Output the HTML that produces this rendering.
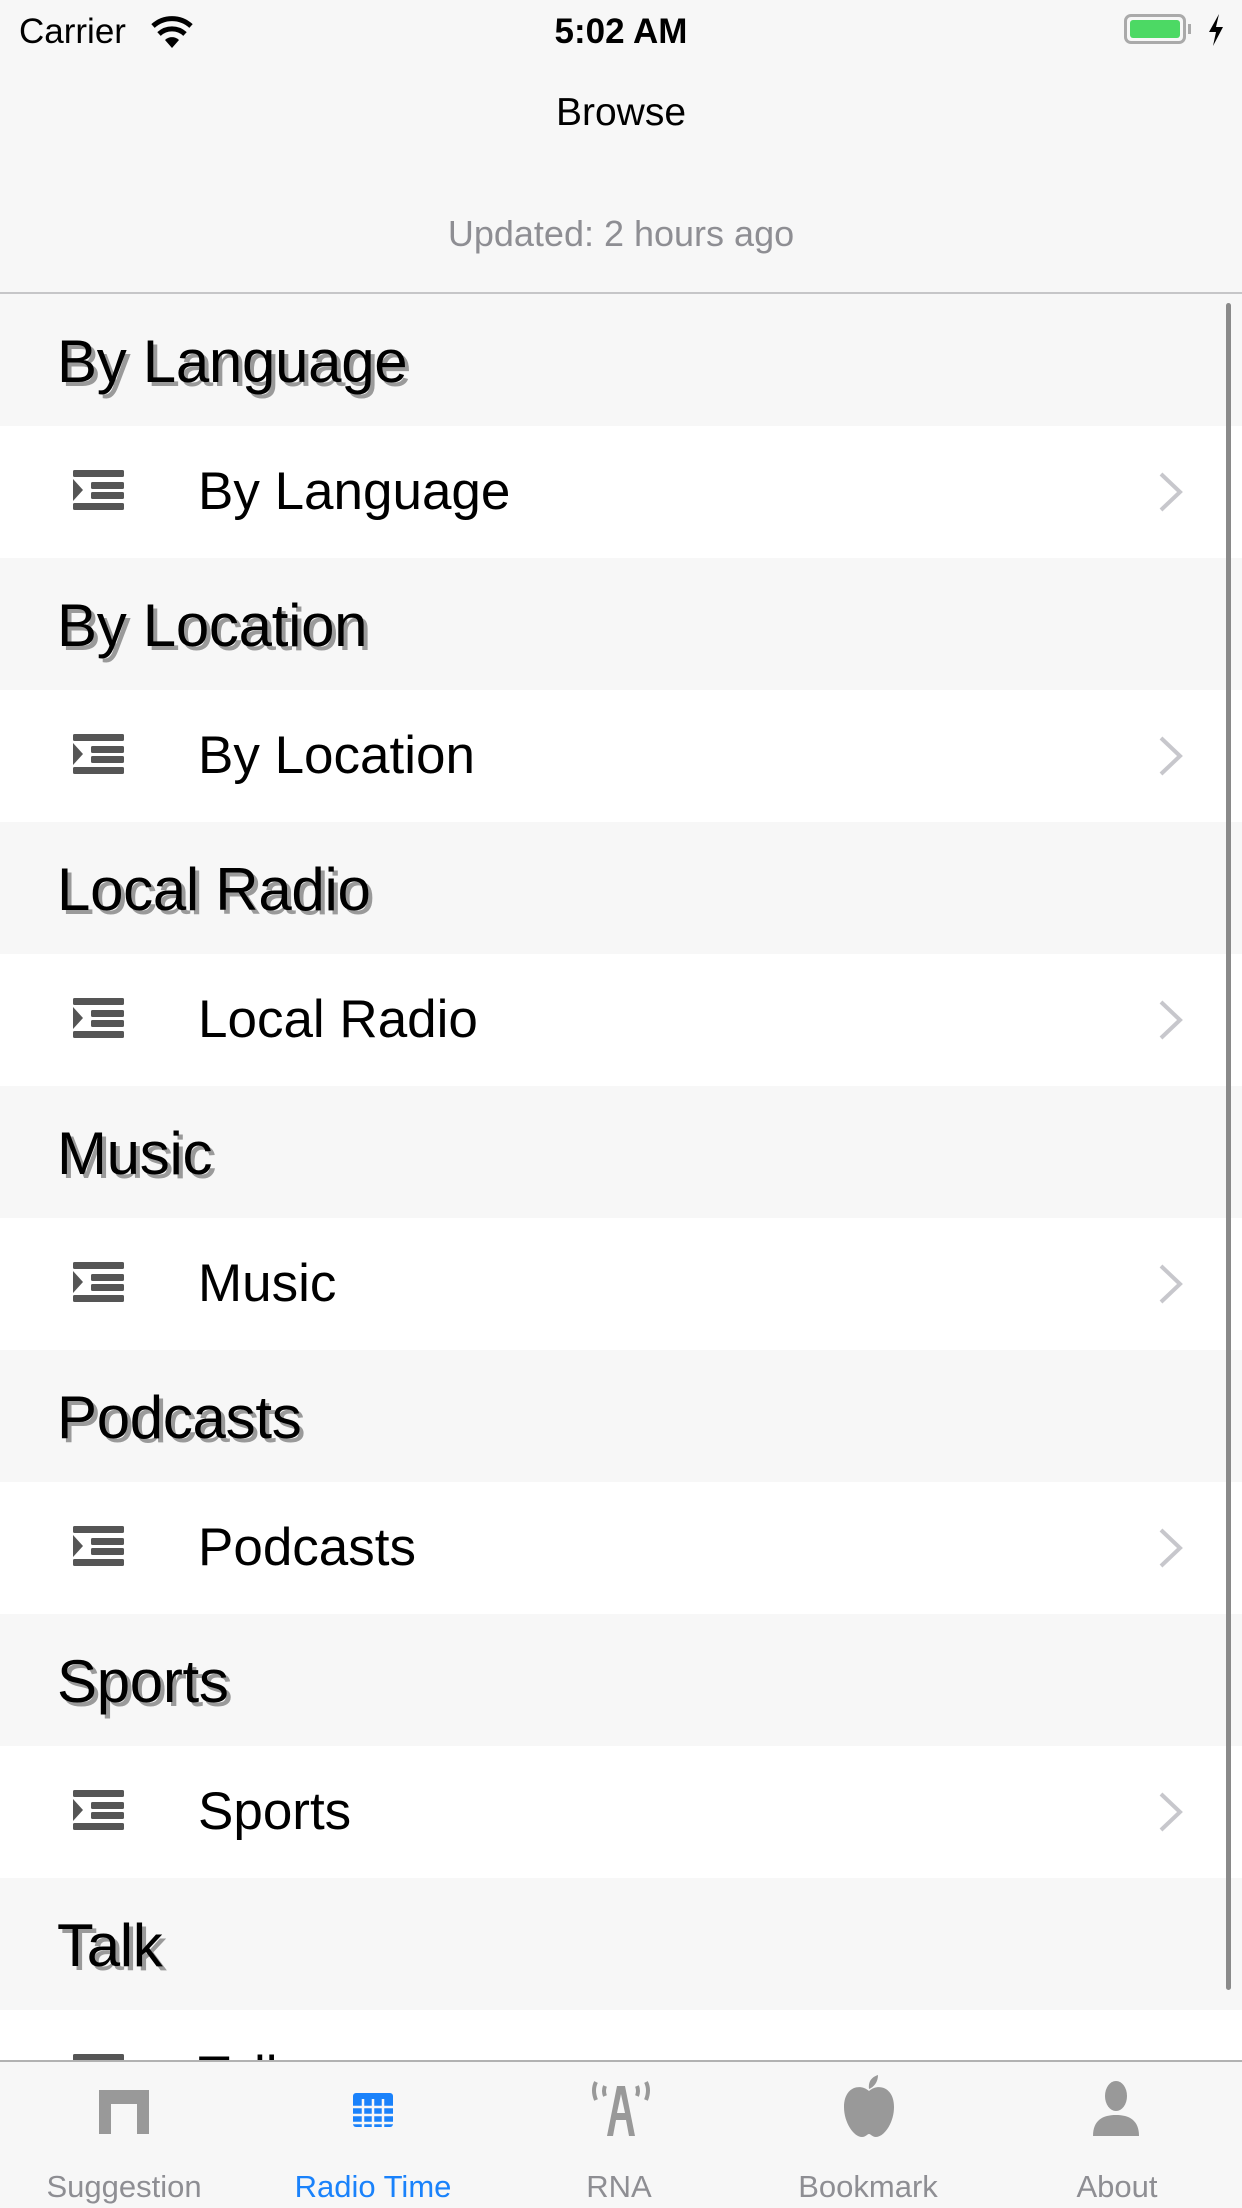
<!DOCTYPE html>
<html><head><meta charset="utf-8"><style>
body{margin:0;width:1242px;height:2208px;overflow:hidden;background:#fff;font-family:"Liberation Sans",Helvetica,sans-serif;position:relative}
.abs{position:absolute}
.sec{position:absolute;left:0;width:1242px;height:132px;background:#f7f7f7}
.sec span{position:absolute;left:57px;top:33px;font-size:60px;color:#000;text-shadow:4px 4px 0 #9a9a9a;letter-spacing:-0.3px}
.row{position:absolute;left:0;width:1242px;height:132px;background:#fff}
.row span{position:absolute;left:198px;top:35px;font-size:53px;color:#000}
.row svg.ic{position:absolute;left:73px;top:44px}
.row svg.ch{position:absolute;left:1158px;top:46px}
.tab{position:absolute;top:2060px;width:248px;height:148px;text-align:center}
.tab .l{position:absolute;left:0;right:0;top:109px;font-size:31px;color:#8e8e93}
</style></head><body>
<div class="abs" style="left:0;top:0;width:1242px;height:294px;background:#f7f7f7;border-bottom:2px solid #c6c6c8;box-sizing:border-box"></div>
<div class="abs" style="left:19px;top:12px;font-size:35px">Carrier</div>
<svg class="abs" style="left:150px;top:14px" width="44" height="34" viewBox="0 0 44 34"><path d="M22 34 L15 26 A10 10 0 0 1 29 26 Z" fill="#000"/><path d="M9 20 A19 19 0 0 1 35 20" stroke="#000" stroke-width="5" fill="none"/><path d="M3 12 A28 28 0 0 1 41 12" stroke="#000" stroke-width="5" fill="none"/></svg>
<div class="abs" style="left:0;width:1242px;top:12px;text-align:center;font-size:35px;font-weight:bold">5:02 AM</div>
<div class="abs" style="left:1124px;top:14px;width:62px;height:30px;border:3px solid #aaa;border-radius:7px;box-sizing:border-box;padding:3px"><div style="width:100%;height:100%;background:#4cd964;border-radius:3px"></div></div>
<div class="abs" style="left:1188px;top:24px;width:3px;height:10px;background:#aaa"></div>
<svg class="abs" style="left:1208px;top:14px" width="16" height="32" viewBox="0 0 16 32"><path d="M11 0 L1 18 H8 L5 32 L15 13 H8 Z" fill="#000"/></svg>
<div class="abs" style="left:0;width:1242px;top:91px;text-align:center;font-size:39px">Browse</div>
<div class="abs" style="left:0;width:1242px;top:213px;text-align:center;font-size:36px;color:#8e8e93">Updated: 2 hours ago</div>

<div class="sec" style="top:294px"><span>By Language</span></div>
<div class="row" style="top:426px"><svg class="ic" width="52" height="42" viewBox="0 0 52 42"><rect x="0" y="0" width="51" height="7" rx="1.5" fill="#555"/><rect x="18" y="12" width="33" height="7" rx="1.5" fill="#555"/><rect x="18" y="22" width="33" height="7" rx="1.5" fill="#555"/><rect x="0" y="33" width="51" height="7" rx="1.5" fill="#555"/><path d="M0 9 L10 20 L0 31Z" fill="#555"/></svg><span>By Language</span><svg class="ch" width="26" height="40" viewBox="0 0 26 40"><path d="M3 2 L22 20 L3 38" stroke="#c7c7cc" stroke-width="4" fill="none"/></svg></div>
<div class="sec" style="top:558px"><span>By Location</span></div>
<div class="row" style="top:690px"><svg class="ic" width="52" height="42" viewBox="0 0 52 42"><rect x="0" y="0" width="51" height="7" rx="1.5" fill="#555"/><rect x="18" y="12" width="33" height="7" rx="1.5" fill="#555"/><rect x="18" y="22" width="33" height="7" rx="1.5" fill="#555"/><rect x="0" y="33" width="51" height="7" rx="1.5" fill="#555"/><path d="M0 9 L10 20 L0 31Z" fill="#555"/></svg><span>By Location</span><svg class="ch" width="26" height="40" viewBox="0 0 26 40"><path d="M3 2 L22 20 L3 38" stroke="#c7c7cc" stroke-width="4" fill="none"/></svg></div>
<div class="sec" style="top:822px"><span>Local Radio</span></div>
<div class="row" style="top:954px"><svg class="ic" width="52" height="42" viewBox="0 0 52 42"><rect x="0" y="0" width="51" height="7" rx="1.5" fill="#555"/><rect x="18" y="12" width="33" height="7" rx="1.5" fill="#555"/><rect x="18" y="22" width="33" height="7" rx="1.5" fill="#555"/><rect x="0" y="33" width="51" height="7" rx="1.5" fill="#555"/><path d="M0 9 L10 20 L0 31Z" fill="#555"/></svg><span>Local Radio</span><svg class="ch" width="26" height="40" viewBox="0 0 26 40"><path d="M3 2 L22 20 L3 38" stroke="#c7c7cc" stroke-width="4" fill="none"/></svg></div>
<div class="sec" style="top:1086px"><span>Music</span></div>
<div class="row" style="top:1218px"><svg class="ic" width="52" height="42" viewBox="0 0 52 42"><rect x="0" y="0" width="51" height="7" rx="1.5" fill="#555"/><rect x="18" y="12" width="33" height="7" rx="1.5" fill="#555"/><rect x="18" y="22" width="33" height="7" rx="1.5" fill="#555"/><rect x="0" y="33" width="51" height="7" rx="1.5" fill="#555"/><path d="M0 9 L10 20 L0 31Z" fill="#555"/></svg><span>Music</span><svg class="ch" width="26" height="40" viewBox="0 0 26 40"><path d="M3 2 L22 20 L3 38" stroke="#c7c7cc" stroke-width="4" fill="none"/></svg></div>
<div class="sec" style="top:1350px"><span>Podcasts</span></div>
<div class="row" style="top:1482px"><svg class="ic" width="52" height="42" viewBox="0 0 52 42"><rect x="0" y="0" width="51" height="7" rx="1.5" fill="#555"/><rect x="18" y="12" width="33" height="7" rx="1.5" fill="#555"/><rect x="18" y="22" width="33" height="7" rx="1.5" fill="#555"/><rect x="0" y="33" width="51" height="7" rx="1.5" fill="#555"/><path d="M0 9 L10 20 L0 31Z" fill="#555"/></svg><span>Podcasts</span><svg class="ch" width="26" height="40" viewBox="0 0 26 40"><path d="M3 2 L22 20 L3 38" stroke="#c7c7cc" stroke-width="4" fill="none"/></svg></div>
<div class="sec" style="top:1614px"><span>Sports</span></div>
<div class="row" style="top:1746px"><svg class="ic" width="52" height="42" viewBox="0 0 52 42"><rect x="0" y="0" width="51" height="7" rx="1.5" fill="#555"/><rect x="18" y="12" width="33" height="7" rx="1.5" fill="#555"/><rect x="18" y="22" width="33" height="7" rx="1.5" fill="#555"/><rect x="0" y="33" width="51" height="7" rx="1.5" fill="#555"/><path d="M0 9 L10 20 L0 31Z" fill="#555"/></svg><span>Sports</span><svg class="ch" width="26" height="40" viewBox="0 0 26 40"><path d="M3 2 L22 20 L3 38" stroke="#c7c7cc" stroke-width="4" fill="none"/></svg></div>
<div class="sec" style="top:1878px"><span>Talk</span></div>
<div class="row" style="top:2010px"><svg class="ic" width="52" height="42" viewBox="0 0 52 42"><rect x="0" y="0" width="51" height="7" rx="1.5" fill="#555"/></svg><span>Talk</span></div>

<div class="abs" style="left:1226px;top:303px;width:5px;height:1687px;background:#8a8a8a;border-radius:3px"></div>

<div class="abs" style="left:0;top:2060px;width:1242px;height:148px;background:#f7f7f7;border-top:2px solid #b2b2b2;box-sizing:border-box"></div>
<div class="tab" style="left:0"><svg class="abs" style="left:99px;top:30px" width="50" height="44" viewBox="0 0 50 44"><path d="M0 0 H50 V44 H38 V14 H12 V44 H0 Z" fill="#999"/></svg><div class="l">Suggestion</div></div>
<div class="tab" style="left:249px"><svg class="abs" style="left:104px;top:33px" width="40" height="34" viewBox="0 0 40 34"><rect width="40" height="34" rx="3" fill="#1a82fb"/><g stroke="#f7f7f7" stroke-width="2.5"><path d="M10 6V34M20 6V34M30 6V34M0 14H40M0 22H40M0 30H40"/></g></svg><div class="l" style="color:#1a82fb">Radio Time</div></div>
<div class="tab" style="left:495px"><svg class="abs" style="left:95px;top:20px" width="62" height="56" viewBox="0 0 62 56"><g fill="none" stroke="#999" stroke-width="4"><path d="M6 2 Q2 10 6 20M56 2 Q60 10 56 20M15 6 Q13 11 15 16M47 6 Q49 11 47 16"/></g><path d="M27 6 H35 L45 56 H39 L36 40 H26 L23 56 H17 Z M27 33 H35 L31 14Z" fill="#999"/></svg><div class="l">RNA</div></div>
<div class="tab" style="left:744px"><svg class="abs" style="left:98px;top:15px" width="54" height="62" viewBox="0 0 54 62"><path d="M27 16 C18 8 2 12 2 32 C2 48 12 62 20 62 C24 62 25 59 27 59 C29 59 30 62 34 62 C42 62 52 48 52 32 C52 12 36 8 27 16Z" fill="#999"/><path d="M27 14 C26 6 30 2 36 0 C36 7 32 12 27 14Z" fill="#999"/></svg><div class="l">Bookmark</div></div>
<div class="tab" style="left:993px"><svg class="abs" style="left:100px;top:20px" width="46" height="58" viewBox="0 0 46 58"><ellipse cx="23" cy="16" rx="11" ry="15" fill="#999"/><path d="M0 56 C0 40 10 35 23 35 C36 35 46 40 46 56 Z" fill="#999"/></svg><div class="l">About</div></div>
</body></html>
